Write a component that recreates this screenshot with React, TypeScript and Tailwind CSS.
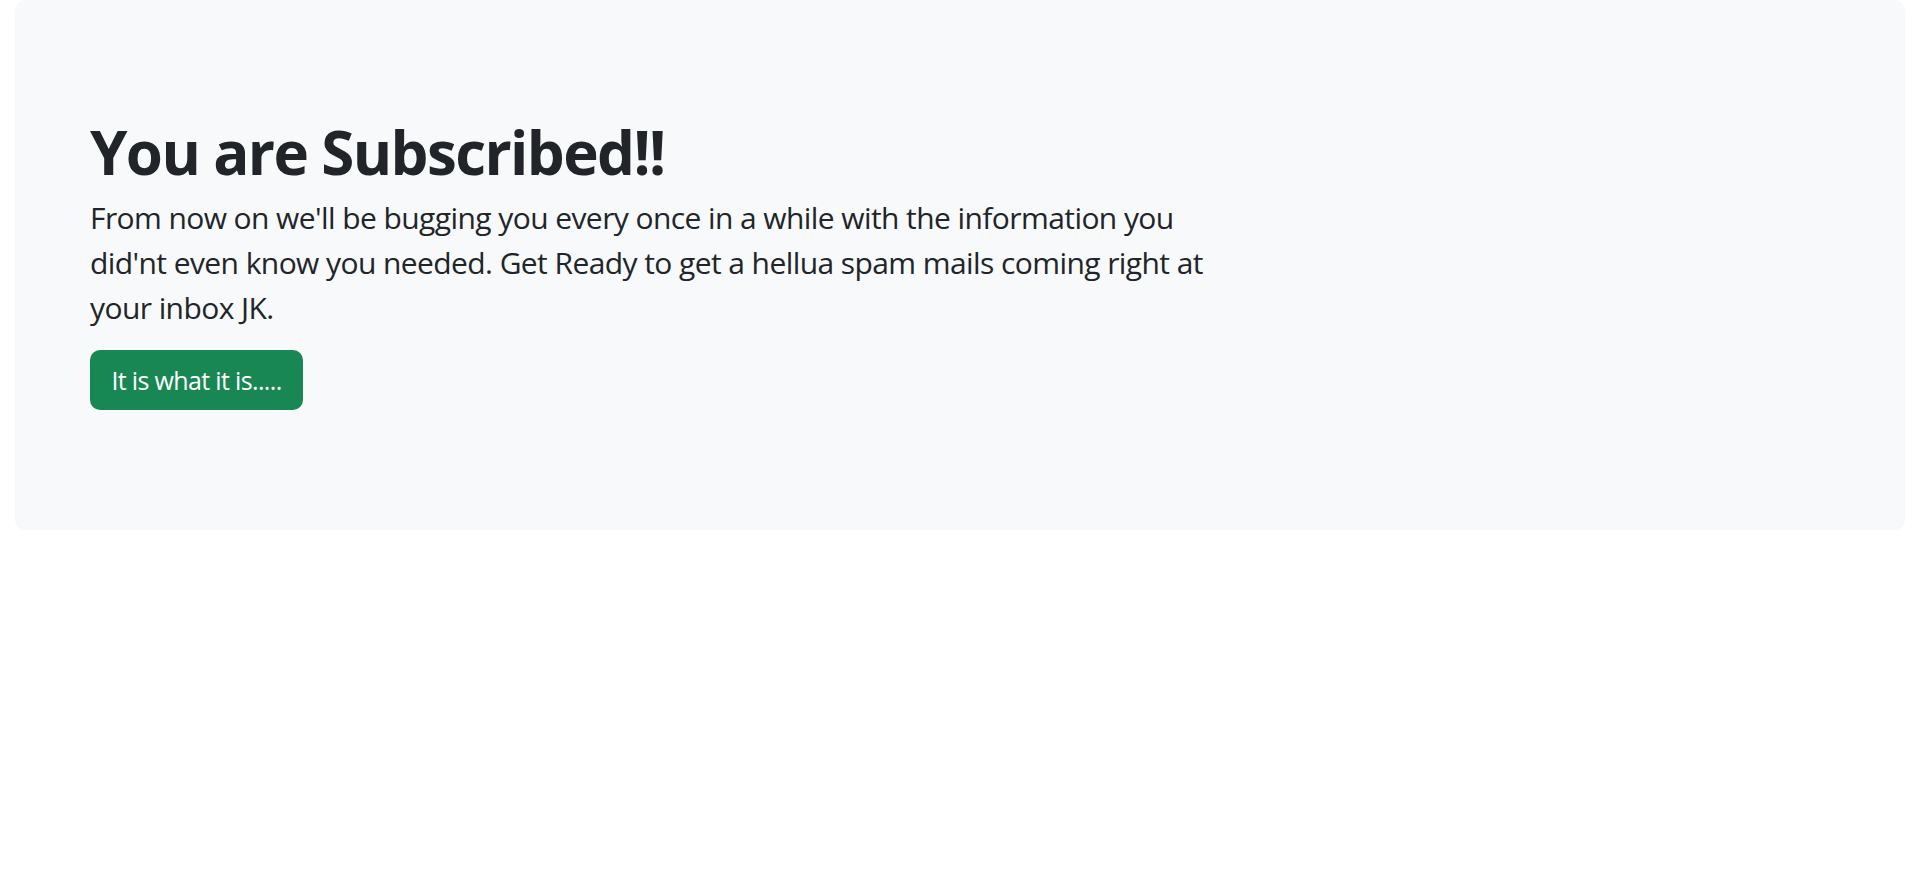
export default function App() {
  return (
    <div
      className="min-h-screen bg-white px-[15px] text-[#212529]"
      style={{ fontFamily: '"Open Sans", "Noto Sans", sans-serif' }}
    >
      {/* Subscribed banner */}
      <div className="mb-[60px] rounded-[10px] bg-[#f8f9fa] pl-[75px] pr-[75px] pt-[116px] pb-[120px]">
        <h1 className="mb-[7px] text-[60px] font-bold leading-[72px] tracking-[-1.6px]">You are Subscribed!!</h1>
        <p className="mb-[20px] w-[1150px] text-[30px] leading-[45px] tracking-[-0.58px]">
          From now on we'll be bugging you every once in a while with the information you
          did'nt even know you needed. Get Ready to get a hellua spam mails coming right at your
          inbox JK.
        </p>
        <button
          type="button"
          className="h-[60px] w-[213px] rounded-[10px] bg-[#198754] text-[25px] leading-[37px] tracking-[-0.65px] text-white"
        >
          It is what it is.....
        </button>
      </div>
    </div>
  );
}
